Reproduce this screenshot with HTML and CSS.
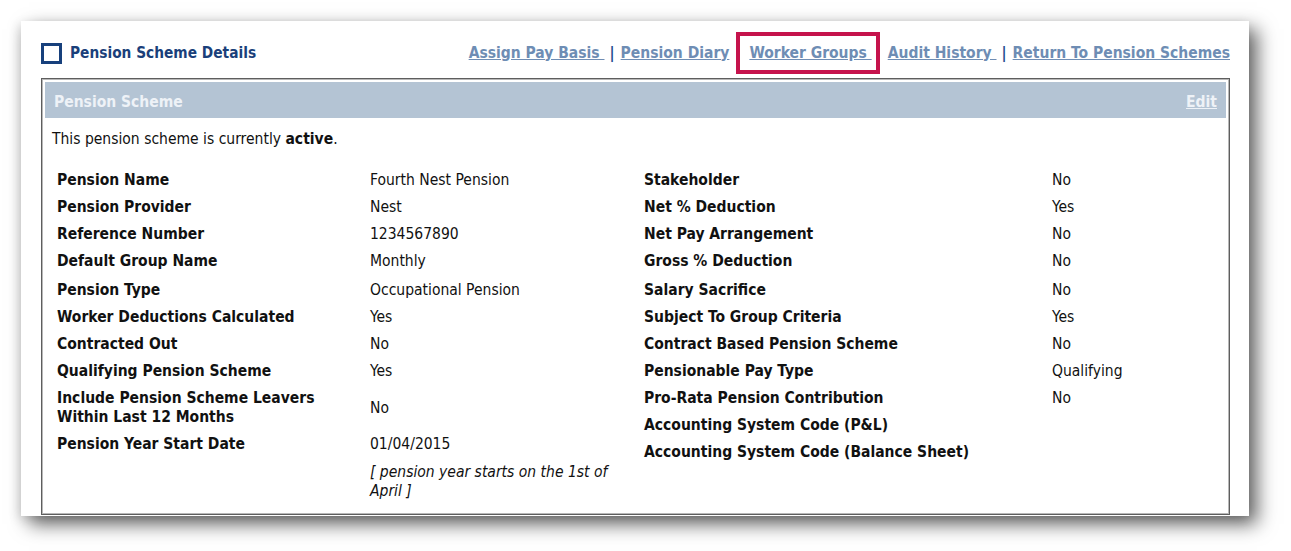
FILE: index.html
```html
<!DOCTYPE html>
<html>
<head>
<meta charset="utf-8">
<link rel="stylesheet" href="styles.css">
</head>
<body>
<div class="card">
  <div class="topbar">
    <div class="title"><span class="chk"></span><span class="title-text">Pension Scheme Details</span></div>
    <nav class="links">
      <a href="#">Assign Pay Basis </a><span class="sep">|</span><a href="#">Pension Diary</a><span class="hl"><a href="#">Worker Groups </a></span><a href="#">Audit History </a><span class="sep">|</span><a href="#">Return To Pension Schemes</a>
    </nav>
  </div>
  <div class="panel">
    <div class="phead"><span class="phead-title">Pension Scheme</span><a href="#" class="edit">Edit</a></div>
    <p class="status">This pension scheme is currently <b>active</b>.</p>
    <div class="cols">
      <div class="grid left">
        <div class="lbl">Pension Name</div><div class="val">Fourth Nest Pension</div>
        <div class="lbl">Pension Provider</div><div class="val">Nest</div>
        <div class="lbl">Reference Number</div><div class="val">1234567890</div>
        <div class="lbl tall">Default Group Name</div><div class="val tall">Monthly</div>
        <div class="lbl">Pension Type</div><div class="val">Occupational Pension</div>
        <div class="lbl">Worker Deductions Calculated</div><div class="val">Yes</div>
        <div class="lbl">Contracted Out</div><div class="val">No</div>
        <div class="lbl">Qualifying Pension Scheme</div><div class="val">Yes</div>
        <div class="lbl">Include Pension Scheme Leavers Within Last 12 Months</div><div class="val mid">No</div>
        <div class="lbl">Pension Year Start Date</div><div class="val">01/04/2015<span class="note">[ pension year starts on the 1st of April ]</span></div>
      </div>
      <div class="grid right">
        <div class="lbl">Stakeholder</div><div class="val">No</div>
        <div class="lbl">Net % Deduction</div><div class="val">Yes</div>
        <div class="lbl">Net Pay Arrangement</div><div class="val">No</div>
        <div class="lbl tall">Gross % Deduction</div><div class="val tall">No</div>
        <div class="lbl">Salary Sacrifice</div><div class="val">No</div>
        <div class="lbl">Subject To Group Criteria</div><div class="val">Yes</div>
        <div class="lbl">Contract Based Pension Scheme</div><div class="val">No</div>
        <div class="lbl">Pensionable Pay Type</div><div class="val">Qualifying</div>
        <div class="lbl">Pro-Rata Pension Contribution</div><div class="val">No</div>
        <div class="lbl">Accounting System Code (P&amp;L)</div><div class="val"></div>
        <div class="lbl">Accounting System Code (Balance Sheet)</div><div class="val"></div>
      </div>
    </div>
  </div>
</div>
</body>
</html>
```
FILE: styles.css
```css
html, body {
  margin: 0;
  padding: 0;
  background: #ffffff;
}
body {
  font-family: "DejaVu Sans Condensed", "DejaVu Sans", sans-serif;
  font-size: 15.5px;
  color: #111;
  height: 551px;
  overflow: hidden;
}
.card {
  margin: 21px 0 0 21px;
  width: 1228px;
  height: 495px;
  background: #fff;
  box-shadow: 8px 8px 18px rgba(0, 0, 0, 0.62), -3px 3px 10px rgba(0, 0, 0, 0.1);
  padding: 0 19px 0 20px;
  box-sizing: border-box;
  display: flex;
  flex-direction: column;
}
.topbar {
  display: flex;
  justify-content: space-between;
  align-items: center;
  height: 57px;
}
.title {
  display: flex;
  align-items: center;
  gap: 8px;
  margin-top: 7px;
}
.chk {
  width: 15px;
  height: 15px;
  border: 3px solid #17407c;
  display: inline-block;
}
.title-text {
  font-weight: bold;
  font-size: 15.3px;
  color: #1a3f7a;
}
.links {
  display: flex;
  align-items: center;
  font-weight: bold;
  font-size: 15.5px;
  margin-top: 6px;
}
.links a {
  color: #6e8db4;
  text-decoration: underline;
  white-space: pre;
}
.sep {
  color: #1d4f8f;
  margin: 0 6px 0 5px;
}
.hl {
  border: 4px solid #c5134c;
  padding: 8px 4px 8px 9px;
  margin: 0 8px 0 7px;
}
.panel {
  border: 1px solid #5e5e5e;
  box-shadow: inset 0 0 0 1px #b8b8b8;
  padding: 3px;
  height: 437px;
  box-sizing: border-box;
}
.phead {
  background: #b4c4d4;
  height: 36px;
  display: flex;
  justify-content: space-between;
  align-items: center;
  padding: 3px 9px 0;
  box-sizing: border-box;
  font-weight: bold;
  font-size: 15.5px;
  color: #eef2f7;
}
.phead .edit {
  color: #eef2f7;
  text-decoration: underline;
}
.status {
  margin: 12px 0 0 7px;
  line-height: 19px;
}
.cols {
  display: flex;
  margin: 18px 0 0 12px;
}
.grid {
  display: grid;
  align-content: start;
  line-height: 19px;
}
.left {
  width: 587px;
  grid-template-columns: 313px 1fr;
}
.right {
  flex: 1;
  grid-template-columns: 408px 1fr;
}
.lbl {
  font-weight: bold;
  padding: 4px 0;
}
.left .lbl {
  padding-right: 24px;
}
.val {
  padding: 4px 0;
}
.lbl.tall, .val.tall {
  padding-bottom: 6px;
}
.val.mid {
  align-self: center;
}
.note {
  display: block;
  font-style: italic;
  margin-top: 9px;
  padding-right: 14px;
}
```
